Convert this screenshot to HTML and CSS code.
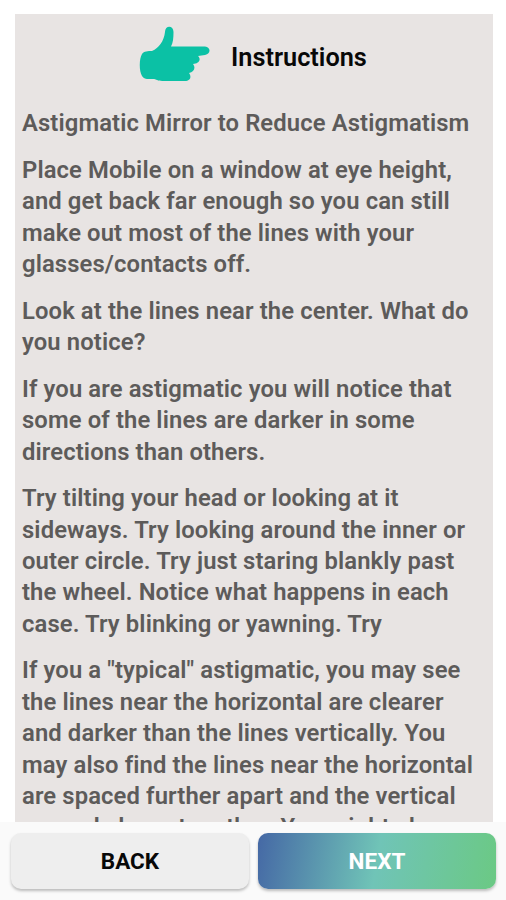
FILE: index.html
```html
<!DOCTYPE html>
<html>
<head>
  <meta charset="utf-8">
  <meta name="viewport" content="width=device-width, initial-scale=1">
  <title>Instructions</title>
  <link rel="stylesheet" href="styles.css">
</head>
<body>
  <main class="panel">
    <header class="panel-header">
      <svg class="hand" viewBox="0 0 72 58" aria-hidden="true">
        <path d="M13 25 C20 22 25 15 26 6 C26 -1 34.500 -1 34.500 6 C34.500 12 34 17 32 20.500 H66 C72 21 72 28 66 29 L59 30 C63 34 59 38 54 38 C57 42 55 46 50 47 C53 51 51 55 46 55 H25 C20 55 18 54 15 53 C10 53 5 54 3 50 C0 45 0 33 3 28 C5 25 9 25 13 25 Z"/>
      </svg>
      <h1>Instructions</h1>
    </header>
    <div class="content">
      <p>Astigmatic Mirror to Reduce Astigmatism</p>
      <p>Place Mobile on a window at eye height,<br>and get back far enough so you can still<br>make out most of the lines with your<br>glasses/contacts off.</p>
      <p>Look at the lines near the center. What do<br>you notice?</p>
      <p>If you are astigmatic you will notice that<br>some of the lines are darker in some<br>directions than others.</p>
      <p>Try tilting your head or looking at it<br>sideways. Try looking around the inner or<br>outer circle. Try just staring blankly past<br>the wheel. Notice what happens in each<br>case. Try blinking or yawning. Try</p>
      <p>If you a "typical" astigmatic, you may see<br>the lines near the horizontal are clearer<br>and darker than the lines vertically. You<br>may also find the lines near the horizontal<br>are spaced further apart and the vertical<br>spaced closer together. You might also</p>
    </div>
  </main>
  <footer class="actions">
    <button class="btn back">BACK</button>
    <button class="btn next">NEXT</button>
  </footer>
</body>
</html>
```
FILE: styles.css
```css
* { box-sizing: border-box; }
body { margin: 0; height: 900px; padding-top: 14px; display: flex; flex-direction: column; background: #fff; font-family: Roboto, sans-serif; overflow: hidden; }
.panel { height: 808px; margin: 0 13px 0 15px; background: #e8e4e3; overflow: hidden; }
.panel-header { height: 94.4px; padding: 12px 0 0 124px; display: flex; align-items: flex-start; gap: 20px; }
.hand { width: 72px; height: 58px; fill: #0bc1a5; }
h1 { margin: 16px 0 0; font-size: 25.3px; line-height: 32px; font-weight: 600; color: #080808; white-space: nowrap; }
.content { padding-left: 7px; color: #5d5b5a; font-size: 23.8px; font-weight: 600; line-height: 31.4px; letter-spacing: 0.12px; white-space: nowrap; }
.content p { margin: 0 0 15.2px; }
.actions { flex: 1; padding: 11px 10px 11px 11px; display: flex; gap: 9px; background: #fafafa; }
.btn { flex: 1; height: 56px; padding: 0; border: none; border-radius: 10px; font: 700 22.5px/56px Roboto, sans-serif; box-shadow: 0 2px 3px rgba(0,0,0,0.25); }
.back { background: #eee; color: #080808; }
.next { background: linear-gradient(100deg, #4568a5 0%, #70c4b7 50%, #6bc984 100%); color: #fff; }
```
